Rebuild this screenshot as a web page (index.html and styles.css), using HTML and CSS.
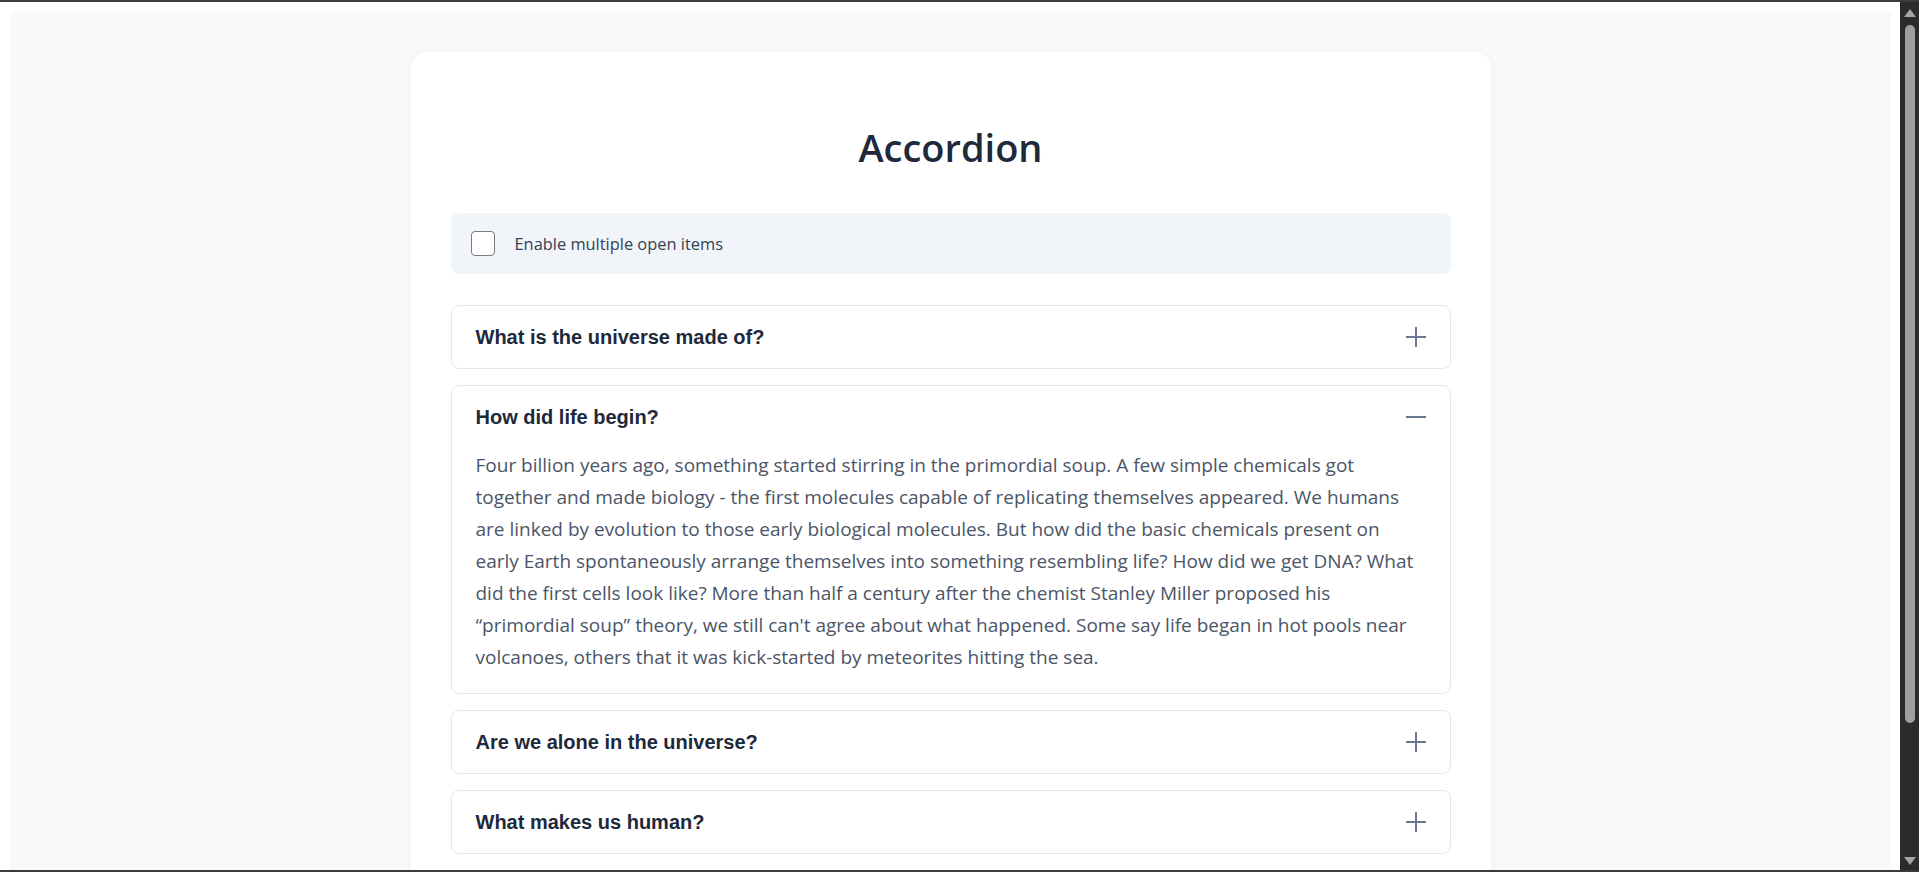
FILE: index.html
```html
<!DOCTYPE html>
<html lang="en">
<head>
<meta charset="utf-8">
<title>Accordion</title>
<link rel="stylesheet" href="styles.css">
</head>
<body>
<div class="window">
  <div class="viewport">
    <div class="page">
      <main class="card">
        <h1 class="title">Accordion</h1>
        <label class="setting">
          <span class="checkbox"></span>
          <span class="setting-label">Enable multiple open items</span>
        </label>
        <div class="accordion">
          <section class="item">
            <div class="item-head">
              <span class="question">What is the universe made of?</span>
              <svg class="toggle" width="20" height="20" viewBox="0 0 20 20"><path d="M10 0V20M0 10H20"/></svg>
            </div>
          </section>
          <section class="item open">
            <div class="item-head">
              <span class="question">How did life begin?</span>
              <svg class="toggle" width="20" height="20" viewBox="0 0 20 20"><path d="M0 10H20"/></svg>
            </div>
            <p class="answer">Four billion years ago, something started stirring in the primordial soup. A few simple chemicals got together and made biology - the first molecules capable of replicating themselves appeared. We humans are linked by evolution to those early biological molecules. But how did the basic chemicals present on early Earth spontaneously arrange themselves into something resembling life? How did we get DNA? What did the first cells look like? More than half a century after the chemist Stanley Miller proposed his “primordial soup” theory, we still can't agree about what happened. Some say life began in hot pools near volcanoes, others that it was kick-started by meteorites hitting the sea.</p>
          </section>
          <section class="item">
            <div class="item-head">
              <span class="question">Are we alone in the universe?</span>
              <svg class="toggle" width="20" height="20" viewBox="0 0 20 20"><path d="M10 0V20M0 10H20"/></svg>
            </div>
          </section>
          <section class="item">
            <div class="item-head">
              <span class="question">What makes us human?</span>
              <svg class="toggle" width="20" height="20" viewBox="0 0 20 20"><path d="M10 0V20M0 10H20"/></svg>
            </div>
          </section>
          <section class="item item-peek" aria-hidden="true">
            <div class="item-head"></div>
          </section>
        </div>
      </main>
    </div>
  </div>
  <div class="scrollbar">
    <div class="arrow arrow-up"></div>
    <div class="track"><div class="thumb"></div></div>
    <div class="arrow arrow-down"></div>
  </div>
</div>
</body>
</html>
```
FILE: styles.css
```css
* { box-sizing: border-box; }

html, body {
  margin: 0;
  padding: 0;
  height: 872px;
  overflow: hidden;
  background: #ffffff;
}

.window {
  display: flex;
  height: 872px;
  border-top: 2px solid #3b3b3b;
  border-bottom: 2px solid #3b3b3b;
}

.viewport {
  flex: 1;
  overflow: hidden;
  background: #ffffff;
  padding: 10px 9px 0 10px;
}

.page {
  background: #f8f9fb;
  min-height: 100%;
  padding-top: 40px;
}

.card {
  width: 1080px;
  margin: 0 auto;
  background: #ffffff;
  border-radius: 16px;
  box-shadow: 0 2px 10px rgba(15, 23, 42, 0.04);
  padding: 71px 40px 40px;
}

.title {
  margin: 0 0 42px;
  text-align: center;
  font-family: "Open Sans", "Noto Sans", sans-serif;
  font-weight: 600;
  font-size: 38px;
  line-height: 48px;
  color: #1e293b;
}

.setting {
  display: flex;
  align-items: center;
  gap: 20px;
  height: 61px;
  padding: 0 20px;
  background: #f1f4f8;
  border-radius: 8px;
  margin-bottom: 31px;
}

.checkbox {
  width: 24px;
  height: 25px;
  border: 1.5px solid #7a7a7a;
  border-radius: 4px;
  background: #ffffff;
  flex: none;
}

.setting-label {
  font-family: "Open Sans", "Noto Sans", sans-serif;
  font-size: 16.4px;
  color: #334155;
}

.accordion {
  display: flex;
  flex-direction: column;
  gap: 16px;
}

.item {
  border: 1px solid #e2e8f0;
  border-radius: 8px;
  background: #ffffff;
}

.item-head {
  display: flex;
  align-items: center;
  justify-content: space-between;
  height: 62px;
  padding: 0 24px 0 24px;
}

.question {
  font-family: "Liberation Sans", Arial, sans-serif;
  font-weight: 700;
  font-size: 20px;
  color: #1e293b;
}

.toggle {
  flex: none;
  fill: none;
  stroke: #6b7791;
  stroke-width: 2;
}

.answer {
  margin: 0;
  padding: 1px 24px 20px;
  font-family: "Open Sans", "Noto Sans", sans-serif;
  font-size: 19px;
  line-height: 32px;
  color: #4b5567;
}

.scrollbar {
  width: 19px;
  flex: none;
  background: #2b2b2b;
  display: flex;
  flex-direction: column;
  align-items: center;
  padding: 7px 0 5px;
}

.arrow {
  width: 0;
  height: 0;
  border-left: 6px solid transparent;
  border-right: 6px solid transparent;
  flex: none;
}

.arrow-up {
  border-bottom: 8px solid #a3a3a3;
}

.arrow-down {
  border-top: 8px solid #a3a3a3;
}

.track {
  flex: 1;
  width: 100%;
  display: flex;
  justify-content: center;
  padding: 8px 0 0;
}

.thumb {
  width: 10px;
  height: 698px;
  border-radius: 5px;
  background: #9f9f9f;
}
```
